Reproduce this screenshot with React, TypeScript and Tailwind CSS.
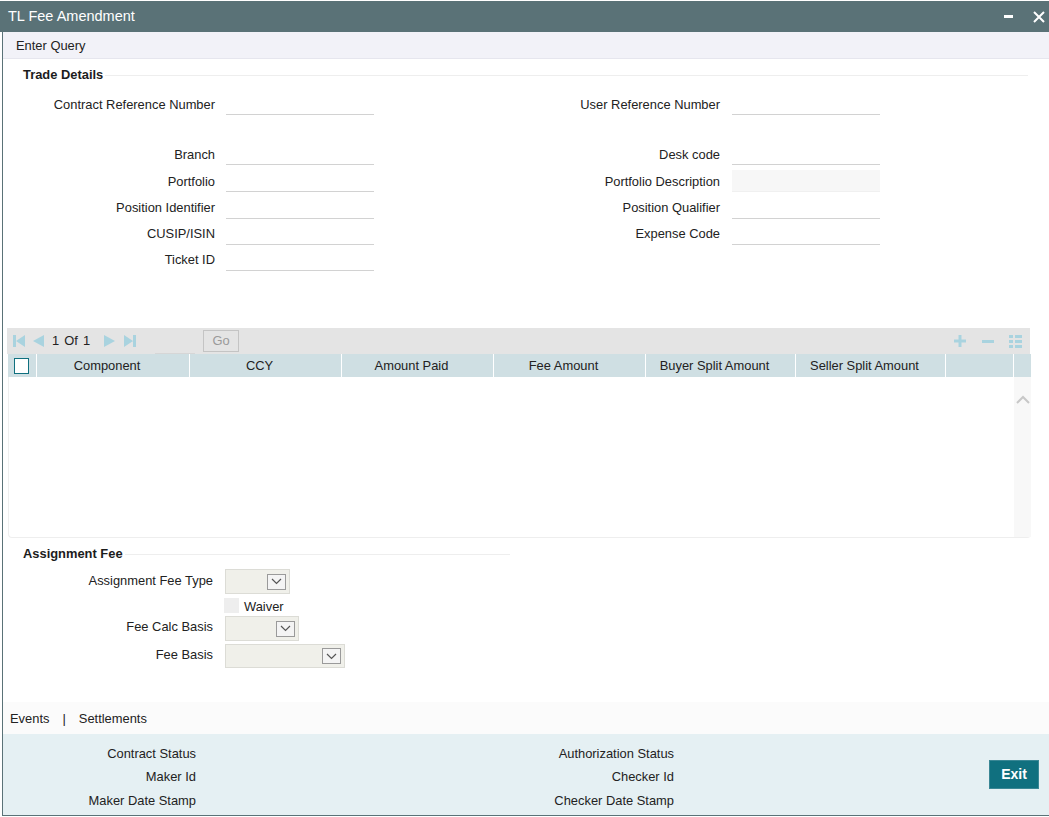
const rows = [
  { h: "h-[40px]", pb: "pb-[1px]", left: "Contract Reference Number", right: "User Reference Number" },
  { h: "h-[50px]", pb: "pb-[1px]", left: "Branch", right: "Desk code" },
  { h: "h-[27px]", pb: "pb-[1px]", left: "Portfolio", right: "Portfolio Description", shaded: true },
  { h: "h-[27px]", pb: "pb-[2px]", left: "Position Identifier", right: "Position Qualifier" },
  { h: "h-[26px]", pb: "pb-[2px]", left: "CUSIP/ISIN", right: "Expense Code" },
  { h: "h-[26px]", pb: "pb-[2px]", left: "Ticket ID" },
];

const columns = [
  { name: "Component", w: "w-[153px]" },
  { name: "CCY", w: "w-[152px]" },
  { name: "Amount Paid", w: "w-[152px]" },
  { name: "Fee Amount", w: "w-[152px]" },
  { name: "Buyer Split Amount", w: "w-[150px]" },
  { name: "Seller Split Amount", w: "w-[150px]" },
  { name: "", w: "w-[68px]" },
];

function NavIcon({ kind }: { kind: "first" | "prev" | "next" | "last" }) {
  return (
    <svg width="12" height="14" viewBox="0 0 12 14" fill="#a9d3df">
      {kind === "first" && <path d="M0 1h3v12H0zM12 1v12L3 7z" />}
      {kind === "prev" && <path d="M12 1v12L1 7z" />}
      {kind === "next" && <path d="M0 1v12l11-6z" />}
      {kind === "last" && <path d="M9 1h3v12H9zM0 1v12l9-6z" />}
    </svg>
  );
}

function Select({ width }: { width: string }) {
  return (
    <div className={`ml-[12px] flex items-center justify-end border border-[#dcdcd6] bg-[#f0f0ea] pr-[3px] ${width}`}>
      <div className="flex h-[16px] w-[19px] items-center justify-center border border-[#9a9a9a] bg-[#f4f4f4]">
        <svg width="11" height="7" viewBox="0 0 11 7" fill="none" stroke="#555" strokeWidth="1.2">
          <path d="M1 1l4.5 4.5L10 1" />
        </svg>
      </div>
    </div>
  );
}

function SectionHeading({ title, lineWidth }: { title: string; lineWidth: string }) {
  return (
    <div className="flex items-center pl-[20px]">
      <span className="text-[12.9px] leading-[18px] font-bold text-[#1c1c1c]">{title}</span>
      <div className={`ml-[2px] h-px bg-[#eeeeee] ${lineWidth}`} />
    </div>
  );
}

export default function App() {
  return (
    <div className="h-[817px] w-[1049px] overflow-hidden bg-white pt-px font-['Liberation_Sans',Arial,sans-serif] text-[12.9px] text-[#222]">
      <div className="flex h-[31px] items-center justify-between bg-[#5a7277] pl-[8px] pr-[4px] text-white">
        <span className="text-[14.5px]">TL Fee Amendment</span>
        <div className="flex items-center gap-[20px]">
          <div className="h-[3px] w-[9px] bg-white" />
          <svg width="12" height="12" viewBox="0 0 12 12" stroke="white" strokeWidth="2">
            <path d="M1 1l10 10M11 1L1 11" />
          </svg>
        </div>
      </div>

      <div className="ml-[2px] h-[784px] border-b border-l border-[#5a7277]">
        <div className="flex h-[27px] items-center border-b border-[#e6e6ee] bg-[#f2f2f8] pl-[13px] pt-px">Enter Query</div>

        <div className="pt-[7px]">
          <SectionHeading title="Trade Details" lineWidth="w-[923px]" />
        </div>

        <div className="-mt-[9px]">
          {rows.map((row) => (
            <div key={row.left} className={`flex items-end ${row.h}`}>
              <div className={`w-[212px] text-right leading-[18px] ${row.pb}`}>{row.left}</div>
              <div className="ml-[11px] h-[26px] w-[148px] border-b border-[#d2d2d2]" />
              {row.right && (
                <>
                  <div className={`w-[346px] text-right leading-[18px] ${row.pb}`}>{row.right}</div>
                  <div
                    className={`ml-[12px] w-[148px] border-b ${
                      row.shaded ? "h-[22px] border-[#f0f0f0] bg-[#f7f7f7]" : "h-[26px] border-[#d2d2d2]"
                    }`}
                  />
                </>
              )}
            </div>
          ))}
        </div>

        <div className="ml-[4px] mt-[57px] flex h-[26px] w-[1023px] items-center bg-[#e4e4e4] pl-[6px] pr-[8px]">
          <NavIcon kind="first" />
          <div className="ml-[7px]"><NavIcon kind="prev" /></div>
          <span className="ml-[8px] w-[38px] whitespace-nowrap [word-spacing:1.5px]">1 Of 1</span>
          <div className="ml-[14px]"><NavIcon kind="next" /></div>
          <div className="ml-[8px]"><NavIcon kind="last" /></div>
          <div className="ml-[19px] h-full w-[40px] border-b border-[#d6d6d6]" />
          <div className="ml-[8px] flex h-[22px] w-[36px] items-center justify-center border border-[#c4c4c4] pb-px text-[#9a9a9a]">Go</div>
          <div className="ml-auto flex items-center">
            <svg width="12" height="12" viewBox="0 0 12 12" fill="#a9d3df"><path d="M4.5 0h3v4.5H12v3H7.5V12h-3V7.5H0v-3h4.5z" /></svg>
            <div className="ml-[16px] h-[3px] w-[12px] bg-[#a9d3df]" />
            <svg className="ml-[15px]" width="13" height="13" viewBox="0 0 13 13" fill="#a9d3df"><path d="M0 0h4v3H0zM6 0h7v3H6zM0 5h4v3H0zM6 5h7v3H6zM0 10h4v3H0zM6 10h7v3H6z" /></svg>
          </div>
        </div>

        <div className="ml-[5px] w-[1023px]">
          <div className="flex h-[23px] bg-[#cfdfe3]">
            <div className="flex w-[29px] items-center border-r border-white pl-[6px]">
              <div className="h-[16px] w-[15px] border border-[#10707f] bg-white" />
            </div>
            {columns.map((c, i) => (
              <div key={i} className={`flex items-center justify-center border-r border-white pr-[12px] pt-px ${c.w}`}>{c.name}</div>
            ))}
          </div>
          <div className="flex h-[161px] rounded-b-[4px] border-b border-l border-[#eeeeee]">
            <div className="flex-1" />
            <div className="flex w-[17px] justify-center bg-[#f8f8f8] pt-[18px]">
              <svg width="14" height="9" viewBox="0 0 14 9" fill="none" stroke="#c8c8c8" strokeWidth="2">
                <path d="M1 8l6-6 6 6" />
              </svg>
            </div>
          </div>
        </div>

        <div className="mt-[6px] pt-px">
          <SectionHeading title="Assignment Fee" lineWidth="w-[385px]" />
        </div>
        <div className="mt-[6px] flex h-[25px] items-stretch">
          <div className="flex w-[210px] items-center justify-end pb-px">Assignment Fee Type</div>
          <Select width="w-[65px]" />
        </div>
        <div className="flex h-[22px] items-center">
          <div className="ml-[221px] h-[15px] w-[15px] bg-[#eeeeee]" />
          <span className="ml-[5px] pt-[3px]">Waiver</span>
        </div>
        <div className="flex h-[25px] items-stretch">
          <div className="flex w-[210px] items-center justify-end pb-[3px]">Fee Calc Basis</div>
          <Select width="w-[74px]" />
        </div>
        <div className="mt-[3px] flex h-[24px] items-stretch">
          <div className="flex w-[210px] items-center justify-end pb-[2px]">Fee Basis</div>
          <Select width="w-[120px]" />
        </div>

        <div className="mt-[34px] flex h-[32px] items-center bg-[#fbfbfb] pl-[7px] pt-px">
          <span>Events</span>
          <span className="ml-[13px]">|</span>
          <span className="ml-[13px]">Settlements</span>
        </div>

        <div className="flex h-[81px] bg-[#e5f0f3]">
          <div className="flex w-[193px] flex-col items-end pt-[8px] leading-[23px]">
            <span>Contract Status</span>
            <span>Maker Id</span>
            <span className="mt-px">Maker Date Stamp</span>
          </div>
          <div className="flex w-[478px] flex-col items-end pt-[8px] leading-[23px]">
            <span>Authorization Status</span>
            <span>Checker Id</span>
            <span className="mt-px">Checker Date Stamp</span>
          </div>
          <div className="ml-auto mr-[10px] mt-[26px] flex h-[29px] w-[50px] items-center justify-center border border-[#3a8795] bg-[#10707f] text-[14px] font-bold text-white">Exit</div>
        </div>
      </div>
    </div>
  );
}
